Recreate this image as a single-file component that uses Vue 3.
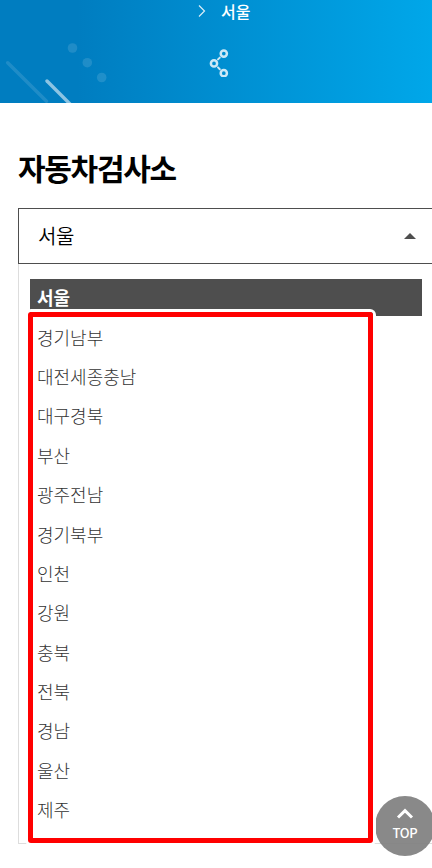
<template>
    <div class="page">
        <header class="visual">
            <svg class="deco" width="120" height="103" viewBox="0 0 120 103">
                <g fill="#fff" fill-opacity="0.12">
                    <circle cx="72.5" cy="48" r="4.8" />
                    <circle cx="87.3" cy="62.7" r="4.8" />
                    <circle cx="101.7" cy="77.5" r="4.8" />
                </g>
                <g stroke="#fff" stroke-width="3.4" stroke-linecap="round">
                    <path d="M7.7 62.7L46.5 101.3" stroke-opacity="0.12" />
                    <path d="M47 81L72 106" stroke-opacity="0.55" />
                </g>
            </svg>
            <div class="location">
                <svg width="8" height="12" viewBox="0 0 8 12" fill="none">
                    <path d="M1 .5L6.5 6L1 11.5" stroke="#fff" stroke-opacity="0.85" stroke-width="1.2" />
                </svg>
                <span>서울</span>
            </div>
            <button class="share" aria-label="공유">
                <svg width="20" height="28" viewBox="0 0 20 28" fill="none" stroke="#fff" stroke-opacity="0.8">
                    <g stroke-width="2.5">
                        <circle cx="14.8" cy="4.6" r="3.1" />
                        <circle cx="5" cy="14.4" r="3.1" />
                        <circle cx="14.8" cy="24.2" r="3.1" />
                    </g>
                    <path d="M9 10.4L10.8 8.6M9 18.4L10.8 20.2" stroke-width="2" stroke-linecap="round" />
                </svg>
            </button>
        </header>

        <main class="content">
            <h1>자동차검사소</h1>
            <div class="select" @click="open = !open">
                <span>{{ selected }}</span>
                <i class="arrow"></i>
            </div>
            <ul class="list" v-if="open">
                <li
                    v-for="item in regions"
                    :key="item"
                    :class="{ on: item === selected }"
                    @click="selected = item"
                >{{ item }}</li>
            </ul>
        </main>

        <a class="top">
            <svg width="18" height="12" viewBox="0 0 18 12" fill="none">
                <path d="M2 10.5L9 3.7L16 10.5" stroke="#fff" stroke-width="3" />
            </svg>
            <span>TOP</span>
        </a>
        <!-- 강조 테두리 -->
        <div class="mark"></div>
    </div>
</template>

<script setup>
    import { ref } from 'vue';

    const open = ref(true);
    const selected = ref('서울');
    const regions = [
        '서울', '경기남부', '대전세종충남', '대구경북', '부산', '광주전남', '경기북부',
        '인천', '강원', '충북', '전북', '경남', '울산', '제주',
    ];
</script>

<style>
    body {
        margin: 0;
        background: #fff;
    }
</style>

<style scoped>
    .page {
        position: relative;
        height: 868px;
        overflow: hidden;
        font-family: "Noto Sans CJK KR", sans-serif;
        color: #000;
    }
    .visual {
        position: relative;
        height: 103px;
        overflow: hidden;
        background: linear-gradient(90deg, #007dc0 18%, #00a7e9 100%);
    }
    .deco {
        position: absolute;
        left: 0;
        top: 0;
    }
    .location {
        display: flex;
        align-items: center;
        height: 22px;
        padding-left: 198px;
        color: #fff;
        font-size: 16px;
        font-weight: 500;
        line-height: 22px;
    }
    .location span {
        padding-left: 15px;
    }
    .share {
        display: block;
        width: 20px;
        height: 28px;
        margin: 27px 0 0 209px;
        padding: 0;
        border: none;
        background: none;
    }
    .content {
        padding: 42px 0 0 18px;
    }
    h1 {
        height: 44px;
        margin: 0 0 19px;
        font-size: 30px;
        font-weight: 700;
        line-height: 44px;
        letter-spacing: -1.3px;
    }
    .select {
        display: flex;
        justify-content: space-between;
        align-items: center;
        box-sizing: border-box;
        height: 56px;
        padding: 0 16px 0 19px;
        border: 1px solid #4e4e4e;
        border-right: none;
        font-size: 20px;
        font-weight: 350;
        letter-spacing: -0.4px;
    }
    .select span {
        padding-bottom: 1px;
    }
    .arrow {
        border: 6px solid transparent;
        border-top: none;
        border-bottom-color: #4e4e4e;
    }
    .list {
        box-sizing: border-box;
        height: 580px;
        margin: 0;
        padding: 15px 10px 0 11px;
        border: 1px solid #ddd;
        border-width: 0 0 1px 1px;
        list-style: none;
    }
    .list li {
        height: 37px;
        margin-bottom: 2.36px;
        padding-left: 7px;
        color: #333;
        font-size: 18px;
        font-weight: 300;
        line-height: 37px;
    }
    .list .on {
        margin-bottom: 2.74px;
        background: #4e4e4e;
        color: #fff;
        font-weight: 700;
    }
    .mark {
        position: absolute;
        left: 28px;
        top: 312px;
        box-sizing: border-box;
        width: 345px;
        height: 531px;
        border: 5px solid #f00;
        border-radius: 3px;
        box-shadow: 0 0 0 3px #fff;
        pointer-events: none;
    }
    .top {
        position: absolute;
        left: 375px;
        top: 796px;
        display: flex;
        flex-direction: column;
        align-items: center;
        box-sizing: border-box;
        width: 60px;
        height: 60px;
        padding-top: 11px;
        border-radius: 50%;
        background: rgba(128, 128, 128, 0.93);
        color: #fff;
        font-size: 13px;
        font-weight: 500;
        letter-spacing: -0.3px;
    }
    .top span {
        margin-top: 4px;
        line-height: 20px;
    }
</style>
